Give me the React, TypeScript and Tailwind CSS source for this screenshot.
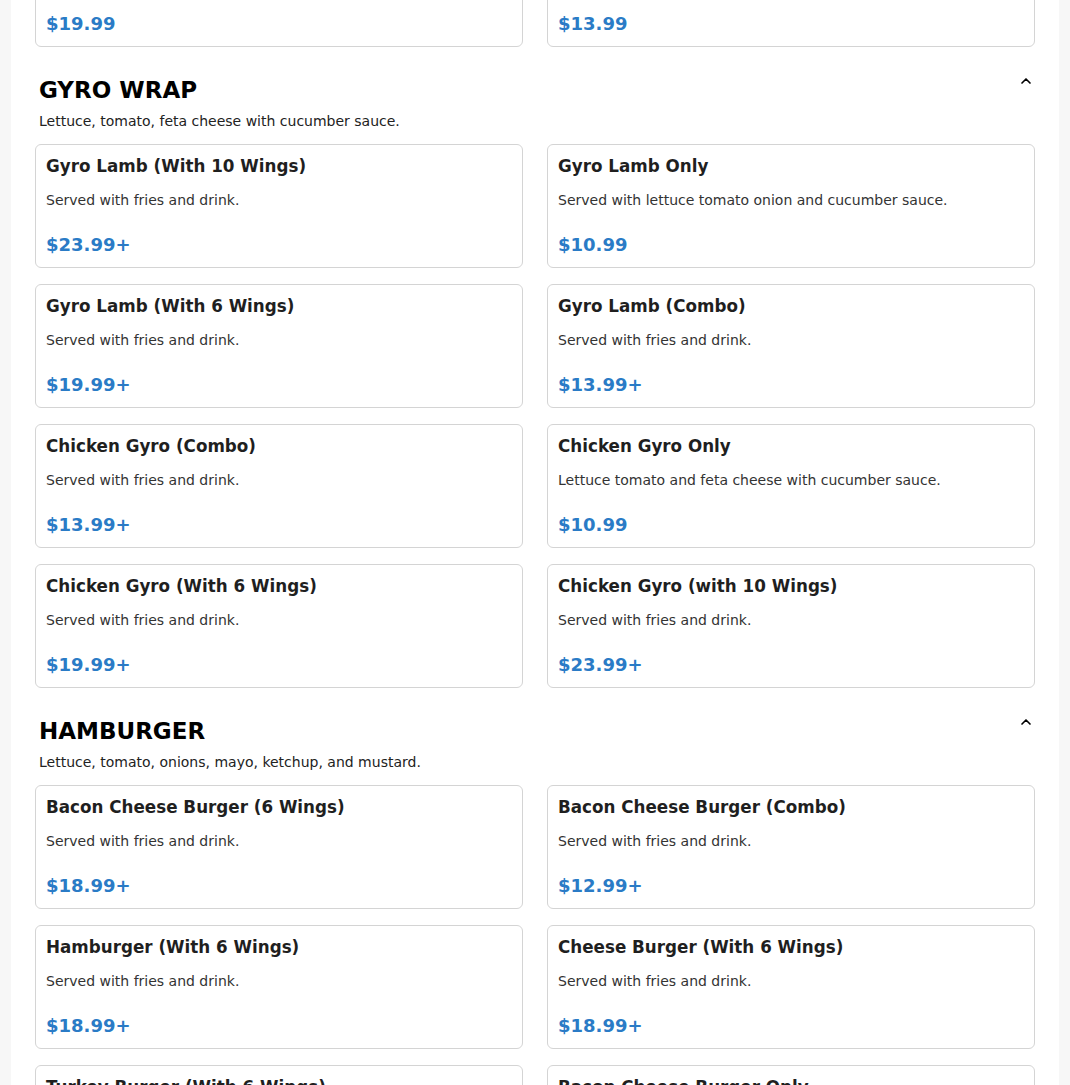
import React from 'react';
import { ChevronUp } from 'lucide-react';

interface MenuItem {
  name: string;
  description: string;
  price: string;
}

interface MenuSection {
  title: string;
  description: string;
  items: MenuItem[];
}

const FRIES = 'Served with fries and drink.';

const sections: MenuSection[] = [
  {
    title: 'WINGS',
    description: 'Fresh wings tossed in your choice of sauce.',
    items: [
      { name: 'Wings (10 Pieces)', description: FRIES, price: '$19.99' },
      { name: 'Wings (6 Pieces)', description: FRIES, price: '$13.99' },
    ],
  },
  {
    title: 'GYRO WRAP',
    description: 'Lettuce, tomato, feta cheese with cucumber sauce.',
    items: [
      { name: 'Gyro Lamb (With 10 Wings)', description: FRIES, price: '$23.99+' },
      { name: 'Gyro Lamb Only', description: 'Served with lettuce tomato onion and cucumber sauce.', price: '$10.99' },
      { name: 'Gyro Lamb (With 6 Wings)', description: FRIES, price: '$19.99+' },
      { name: 'Gyro Lamb (Combo)', description: FRIES, price: '$13.99+' },
      { name: 'Chicken Gyro (Combo)', description: FRIES, price: '$13.99+' },
      { name: 'Chicken Gyro Only', description: 'Lettuce tomato and feta cheese with cucumber sauce.', price: '$10.99' },
      { name: 'Chicken Gyro (With 6 Wings)', description: FRIES, price: '$19.99+' },
      { name: 'Chicken Gyro (with 10 Wings)', description: FRIES, price: '$23.99+' },
    ],
  },
  {
    title: 'HAMBURGER',
    description: 'Lettuce, tomato, onions, mayo, ketchup, and mustard.',
    items: [
      { name: 'Bacon Cheese Burger (6 Wings)', description: FRIES, price: '$18.99+' },
      { name: 'Bacon Cheese Burger (Combo)', description: FRIES, price: '$12.99+' },
      { name: 'Hamburger (With 6 Wings)', description: FRIES, price: '$18.99+' },
      { name: 'Cheese Burger (With 6 Wings)', description: FRIES, price: '$18.99+' },
      { name: 'Turkey Burger (With 6 Wings)', description: FRIES, price: '$18.99+' },
      { name: 'Bacon Cheese Burger Only', description: FRIES, price: '$9.99' },
    ],
  },
];

const ItemCard: React.FC<{ item: MenuItem }> = ({ item }) => (
  <div className="bg-white border border-[#d4d4d4] rounded-md px-[10px] pt-[11px] pb-[8px]">
    <h3 className="text-[16.75px] leading-5 font-bold text-[#1f1f1f]">{item.name}</h3>
    <p className="mt-[14px] text-[14px] leading-5 text-[#333]">{item.description}</p>
    <div className="mt-[21px] text-[18px] leading-7 font-bold text-[#2a7bc6]">{item.price}</div>
  </div>
);

const Section: React.FC<{ section: MenuSection }> = ({ section }) => (
  <section className="pt-[27px]">
    <div className="flex items-start justify-between pl-1 pr-[1px]">
      <div>
        <h2 className="text-[23px] leading-8 font-bold text-black">{section.title}</h2>
        <p className="mt-[5px] text-[14px] leading-5 text-[#222]">{section.description}</p>
      </div>
      <button className="-mt-[1px] text-black">
        <ChevronUp size={16} strokeWidth={2.5} />
      </button>
    </div>
    <div className="mt-[13px] grid grid-cols-2 gap-x-6 gap-y-4">
      {section.items.map((item) => (
        <ItemCard key={item.name} item={item} />
      ))}
    </div>
  </section>
);

export default function App() {
  return (
    <div className="h-[1085px] overflow-hidden bg-[#f7f7f7] font-['DejaVu_Sans',sans-serif]">
      <div className="mx-[11px] bg-white px-6 pb-10 -mt-[174px]">
        {sections.map((s) => (
          <Section key={s.title} section={s} />
        ))}
      </div>
    </div>
  );
}
